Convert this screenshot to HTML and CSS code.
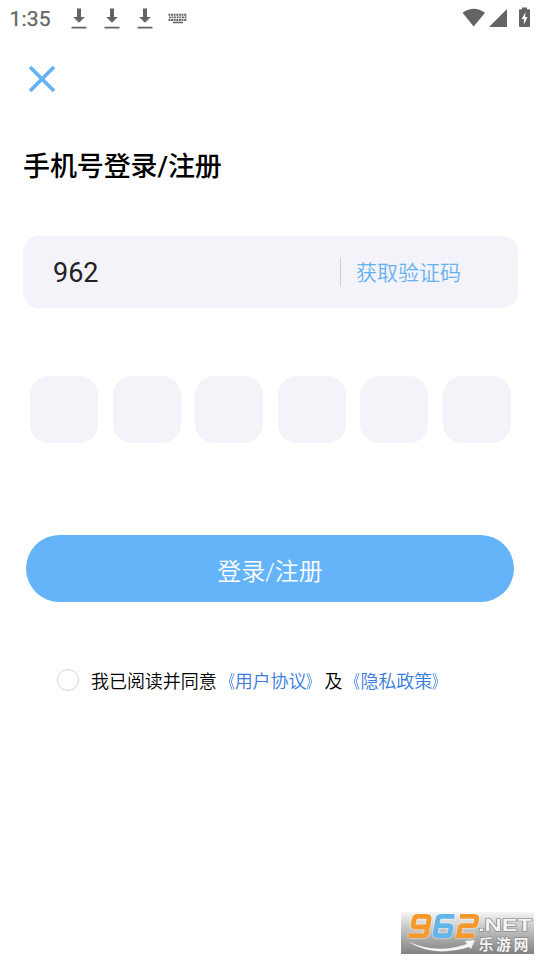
FILE: index.html
```html
<!DOCTYPE html>
<html lang="zh-CN">
<head>
<meta charset="utf-8">
<title>手机号登录/注册</title>
<link rel="stylesheet" href="styles.css">
</head>
<body>
<div class="screen">
  <header class="status">
    <span class="clock">1:35</span>
    <svg class="download" width="16" height="22" viewBox="0 0 16 22"><path d="M6 .5h4v8.500h3.800L8 14.800 2.200 9H6zM.5 18.700h15v1.800H.5z"/></svg>
    <svg class="download" width="16" height="22" viewBox="0 0 16 22"><path d="M6 .5h4v8.500h3.800L8 14.800 2.200 9H6zM.5 18.700h15v1.800H.5z"/></svg>
    <svg class="download" width="16" height="22" viewBox="0 0 16 22"><path d="M6 .5h4v8.500h3.800L8 14.800 2.200 9H6zM.5 18.700h15v1.800H.5z"/></svg>
    <svg class="keyboard" width="20" height="12" viewBox="0 0 20 12"><path d="M.5 1.800h18.500M1 4.400h17.500M.5 7h18.500" stroke-width="1.900" stroke-dasharray="1.900 .7"/><path d="M5 9.500h10" stroke-width="1.500"/></svg>
    <svg class="system" width="70" height="22" viewBox="0 0 70 22"><path d="M.5 4.800Q11.700-3.500 23 4.800L11.700 18.500zM27 19L45 .9V19z"/><path fill-rule="evenodd" d="M60-.5h5V1.300h2q1 0 1 1V18q0 1-1 1h-9q-1 0-1-1V2.300q0-1 1-1h2zM63.500 4.200L59.600 11h2.300v5.500L65.500 9H63z"/></svg>
  </header>
  <svg class="close" width="28" height="28" viewBox="0 0 28 28"><path d="M2 2l24 24M26 2L2 26"/></svg>
  <h1>手机号登录/注册</h1>
  <div class="phone">
    <span class="number">962</span>
    <span class="get-code">获取验证码</span>
  </div>
  <div class="code"><i></i><i></i><i></i><i></i><i></i><i></i></div>
  <button class="submit">登录/注册</button>
  <div class="agreement">
    <span class="radio"></span>
    <span class="terms">我已阅读并同意<a><b class="open">《</b>用户协议<b>》</b></a>及<a><b class="open">《</b>隐私政策<b>》</b></a></span>
  </div>
  <svg class="brand" width="133" height="42" viewBox="0 0 133 42">
    <defs>
      <linearGradient id="shade" x2="0" y2="1"><stop stop-color="#f5f5f5"/><stop offset=".5" stop-color="#b8b8b8"/><stop offset="1" stop-color="#828282"/></linearGradient>
    </defs>
    <path fill="url(#shade)" d="M0 0h133v42H0z"/>
    <g class="digits">
      <path class="orange" d="M26 15H14.500q-2.800 0-2.300-2.500L13.300 7q.500-2.700 3.200-2.700h9.300q2.800 0 2.300 2.700L25.500 21q-.500 2.700-3.200 2.700H7.500"/>
      <path class="blue" d="M53.500 4.300H40.200q-2.700 0-3.200 2.700L34.300 21q-.5 2.700 2.300 2.700h9.200q2.700 0 3.200-2.700l.9-4.600q.500-2.700-2.300-2.700H36"/>
      <path class="orange" d="M59 4.300H73.500q2.800 0 2.300 2.700l-.8 4q-.5 2.700-3.200 2.700H62.200q-2.700 0-3.200 2.700l-1.400 7.300H73"/>
    </g>
    <path class="swoosh" d="M7 29.500q29 13 59 2.500l-2-3 10-1-4 9-2-2Q32 46 7 29.500z"/>
    <text class="net" x="77" y="19" textLength="54" lengthAdjust="spacingAndGlyphs">.NET</text>
    <text class="site" x="77.500" y="37.500" textLength="50">乐游网</text>
  </svg>
</div>
</body>
</html>
```
FILE: styles.css
```css
* { box-sizing: border-box; }
body { margin: 0; background: #fff; }
.screen {
  position: relative;
  width: 540px;
  height: 960px;
  overflow: hidden;
  font-family: Roboto, "Noto Sans CJK SC", sans-serif;
  color: #000;
}
.status { display: flex; height: 37px; padding: 8px 8px 0 9.500px; color: #646464; }
.status svg { fill: currentColor; flex: none; overflow: visible; }
.clock { width: 61px; font-size: 21px; line-height: 22px; letter-spacing: .2px; -webkit-text-stroke: .25px #646464; }
.download { margin-right: 17px; }
.status .keyboard { margin: 5px 0 0 -2px; stroke: currentColor; }
.status .system { margin-left: auto; }
.close { display: block; margin: 27.500px 0 0 28px; fill: none; stroke: #65b2f5; stroke-width: 3.800; }
h1 {
  margin: 54px 0 0 23px;
  height: 40px;
  font-size: 27px;
  line-height: 40px;
  font-weight: 500;
  letter-spacing: -.1px;
}
.phone {
  display: flex;
  align-items: center;
  width: 495px;
  height: 72px;
  margin: 49.500px 0 0 23px;
  padding-left: 30px;
  border-radius: 16px;
  background: #f4f3f9;
}
.number { width: 286.500px; padding-top: 1px; font-size: 27px; color: #222; }
.get-code {
  height: 30px;
  padding: 1px 0 0 15.500px;
  border-left: 1px solid #cfced6;
  font-size: 21px;
  line-height: 31px;
  font-weight: 350;
  color: #65b2f0;
}
.code { display: flex; gap: 14.500px; margin: 67.500px 0 0 30px; }
.code i { width: 68px; height: 67.500px; border-radius: 19px; background: #f4f3f9; }
.submit {
  display: block;
  width: 488px;
  height: 67.500px;
  margin: 91.500px 0 0 26px;
  padding: 8px 0 0;
  border: 0;
  border-radius: 34px;
  background: #65b3f8;
  color: #fff;
  font: 350 24px/34px Roboto, "Noto Sans CJK SC", sans-serif;
}
.agreement { display: flex; align-items: center; height: 30px; margin: 63px 0 0 57px; }
.radio { width: 22px; height: 22px; margin-right: 12px; border: 1px solid #d3d2dc; border-radius: 50%; }
.terms { padding-top: 3px; font-size: 18px; line-height: 28px; letter-spacing: -.05px; font-weight: 350; white-space: nowrap; }
.terms a { color: #397bdc; }
.terms b { display: inline-block; width: 18px; font-weight: inherit; transform: scaleX(.72); transform-origin: left; }
.terms .open { transform-origin: right; }
.brand { position: absolute; left: 401px; top: 912px; }
.digits { fill: none; stroke-width: 4.800; filter: drop-shadow(0 0 1px #fff); }
.orange { stroke: #f7982b; }
.blue { stroke: #61b5e9; }
.swoosh, .net, .site { fill: #f4f4f4; }
.net, .site { stroke: #777; stroke-width: 1px; paint-order: stroke; }
.net { font: bold 17px "Liberation Sans", sans-serif; }
.site { font: 700 15px "Noto Sans CJK SC", sans-serif; }
```
